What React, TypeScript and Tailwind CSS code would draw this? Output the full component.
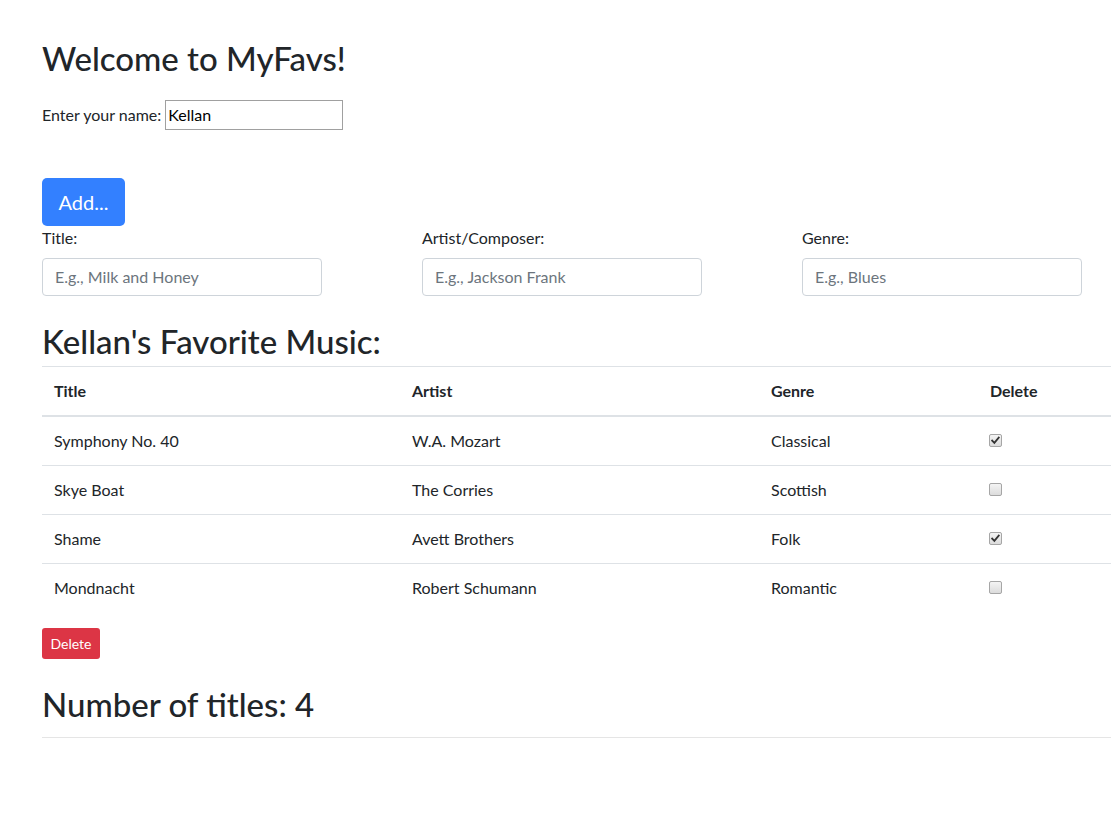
import React from "react";

const rows = [
  { title: "Symphony No. 40", artist: "W.A. Mozart", genre: "Classical", checked: true },
  { title: "Skye Boat", artist: "The Corries", genre: "Scottish", checked: false },
  { title: "Shame", artist: "Avett Brothers", genre: "Folk", checked: true },
  { title: "Mondnacht", artist: "Robert Schumann", genre: "Romantic", checked: false },
];

function Check({ checked }: { checked: boolean }) {
  return (
    <div className="w-[13px] h-[13px] -ml-[1px] -mt-[1px] border border-[#a6a6a6] rounded-[2px] bg-gradient-to-b from-[#f4f4f4] to-[#dcdcdc] flex items-center justify-center">
      {checked && (
        <svg width="9" height="9" viewBox="0 0 9 9">
          <path d="M1.2 4.6 L3.4 6.9 L7.8 1.6" fill="none" stroke="#333" strokeWidth="1.8" strokeLinecap="square" />
        </svg>
      )}
    </div>
  );
}

function Field({ label, placeholder }: { label: string; placeholder: string }) {
  return (
    <div className="w-[280px]">
      <div className="text-[16px] leading-[24px] mb-[8px]">{label}</div>
      <div className="h-[38px] border border-[#ced4da] rounded-[4px] px-[12px] flex items-center text-[16px] text-[#6c757d]">
        {placeholder}
      </div>
    </div>
  );
}

export default function App() {
  return (
    <div className="w-[1111px] min-h-[828px] bg-white overflow-hidden text-[#212529] font-['Lato','Open_Sans',sans-serif]">
      <div className="pl-[42px] pt-[39px] w-[1152px]">
        <h2 className="text-[33px] leading-[38px] font-medium">Welcome to MyFavs!</h2>
        <div className="mt-[23px] flex items-center h-[30px] text-[16px]">
          <span className="mr-[4px]">Enter your name:</span>
          <div className="w-[178px] h-[30px] border border-[#a0a0a0] flex items-center px-[2px] text-black">Kellan</div>
        </div>
        <div className="mt-[48px]">
          <div className="inline-flex items-center justify-center w-[83px] h-[48px] rounded-[5px] bg-[#3380ff] text-white text-[20px]">
            Add...
          </div>
        </div>
        <div className="flex gap-[100px]">
          <Field label="Title:" placeholder="E.g., Milk and Honey" />
          <Field label="Artist/Composer:" placeholder="E.g., Jackson Frank" />
          <Field label="Genre:" placeholder="E.g., Blues" />
        </div>
        <h2 className="mt-[26px] mb-[6px] text-[33px] leading-[38px] font-medium">Kellan's Favorite Music:</h2>
        <table className="w-[1110px] table-fixed border-collapse text-[16px]">
          <colgroup>
            <col className="w-[358px]" />
            <col className="w-[359px]" />
            <col className="w-[219px]" />
            <col className="w-[174px]" />
          </colgroup>
          <thead>
            <tr>
              {["Title", "Artist", "Genre", "Delete"].map((h) => (
                <th key={h} className="text-left font-bold px-[12px] py-[12px] leading-[24px] border-t border-[#dee2e6] border-b-2">
                  {h}
                </th>
              ))}
            </tr>
          </thead>
          <tbody>
            {rows.map((r) => (
              <tr key={r.title}>
                <td className="px-[12px] py-[12px] leading-[24px] border-t border-[#dee2e6]">{r.title}</td>
                <td className="px-[12px] py-[12px] leading-[24px] border-t border-[#dee2e6]">{r.artist}</td>
                <td className="px-[12px] py-[12px] leading-[24px] border-t border-[#dee2e6]">{r.genre}</td>
                <td className="px-[12px] py-[12px] leading-[24px] border-t border-[#dee2e6]">
                  <Check checked={r.checked} />
                </td>
              </tr>
            ))}
          </tbody>
        </table>
        <div className="mt-[16px]">
          <div className="inline-flex items-center justify-center w-[58px] h-[31px] rounded-[3px] bg-[#dc3545] text-white text-[14px]">
            Delete
          </div>
        </div>
        <h2 className="mt-[26px] text-[33px] leading-[38px] font-medium">Number of titles: 4</h2>
        <div className="mt-[14px] border-t border-[#e5e5e5] w-[1110px]" />
      </div>
    </div>
  );
}
